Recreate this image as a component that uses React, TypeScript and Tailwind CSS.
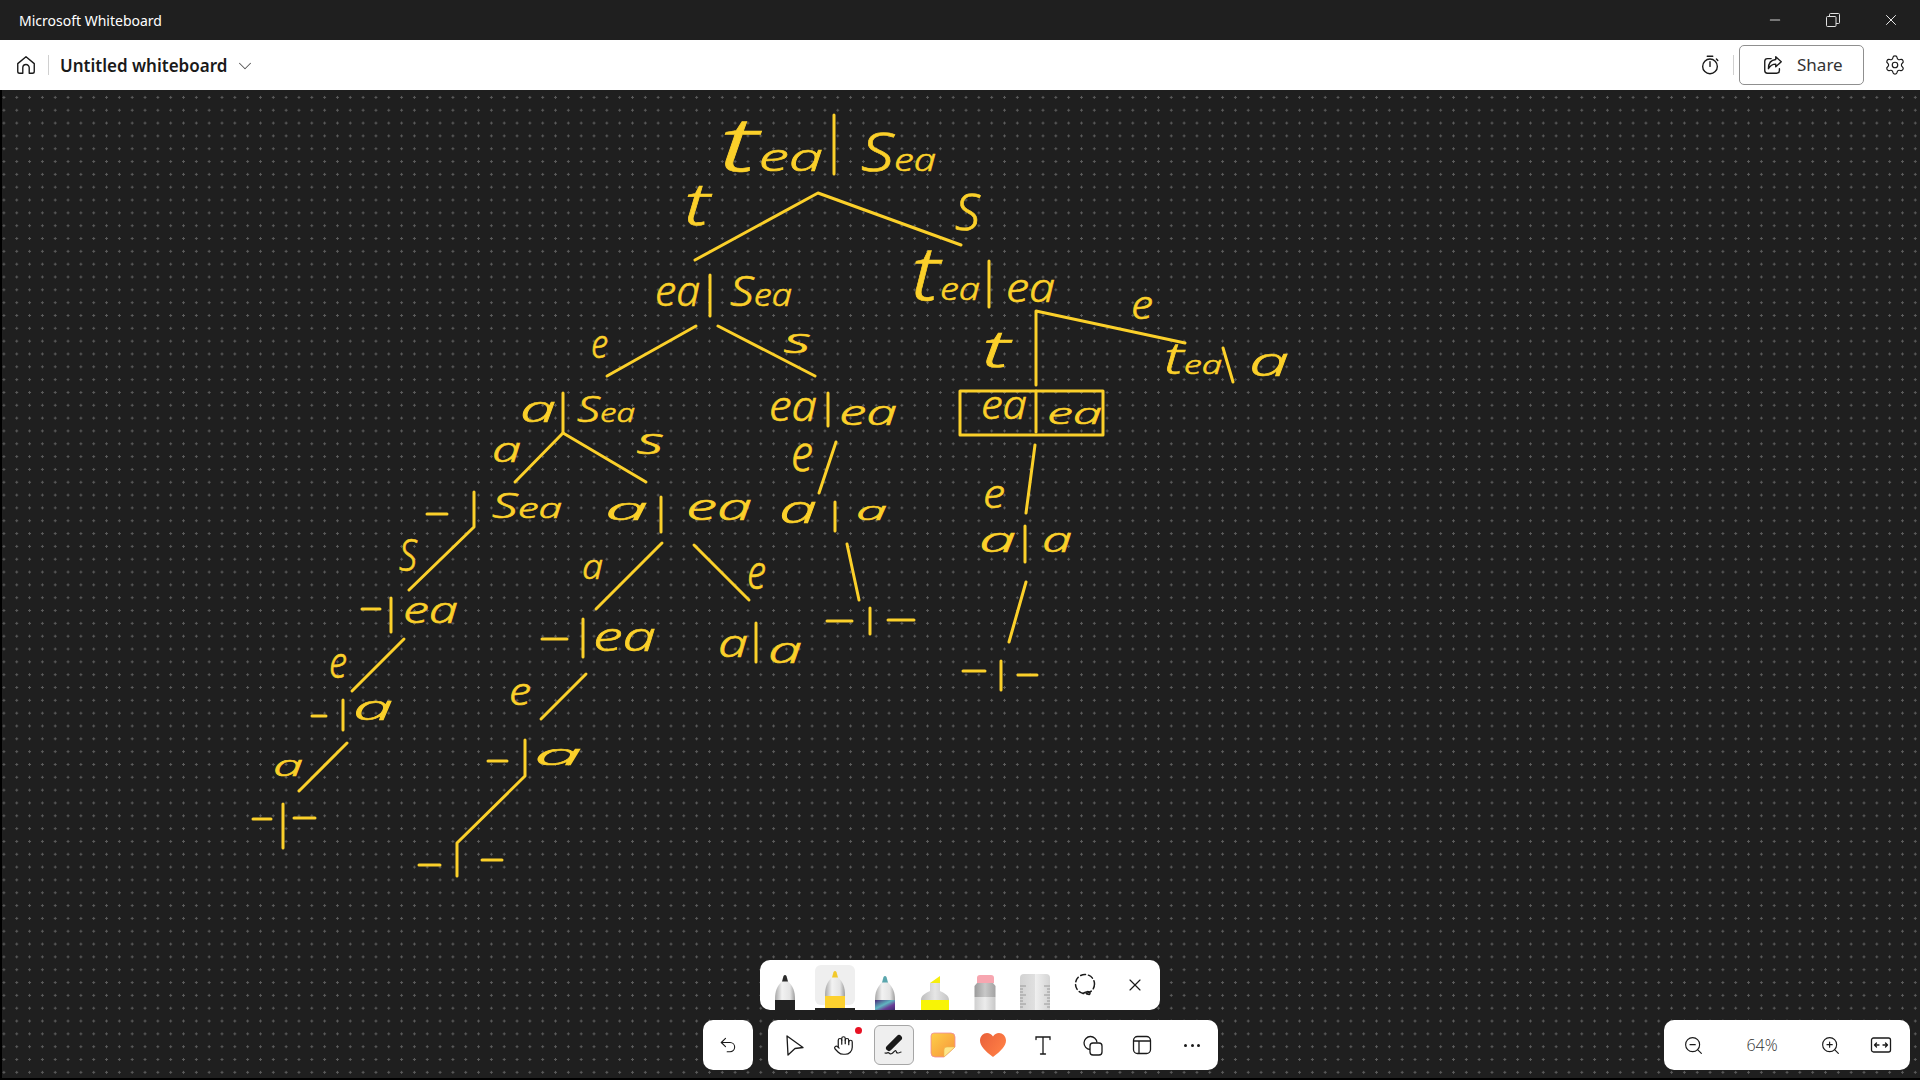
import type { ReactNode } from 'react';
import { ChevronDown, Hand, Minus, Settings, X, ZoomIn, ZoomOut, Undo2 } from 'lucide-react';

const INK = '#fbd02a';

// ink strokes of the tree, in page coordinates
const strokes = [
  'M834 115V174',
  'M695 260L818 193L961 245',
  'M989 261V307',
  'M1036 385V311L1185 343',
  'M1223 348L1233 382',
  'M710 275V316',
  'M696 326L607 376',
  'M718 326L815 376',
  'M960 391H1103V435H960Z',
  'M1036 391V432',
  'M828 393V426',
  'M563 393V433',
  'M515 482L563 433L646 482',
  'M661 497V532',
  'M836 442L819 493',
  'M835 502V531',
  'M662 543L596 609',
  'M694 545L749 600',
  'M847 544L859 600',
  'M827 621H852',
  'M870 608V634',
  'M888 620H914',
  'M542 639H567',
  'M583 619V657',
  'M756 623V662',
  'M427 514H447',
  'M474 492V527L409 590',
  'M362 609H380',
  'M391 598V632',
  'M404 639L352 691',
  'M312 716H326',
  'M343 700V730',
  'M347 743L299 791',
  'M253 819H271',
  'M283 804V848',
  'M294 818H315',
  'M586 674L541 719',
  'M488 761H507',
  'M525 740V776L457 843V876',
  'M419 865H440',
  'M482 860H502',
  'M1035 445L1026 513',
  'M1025 526V562',
  'M1026 582L1009 642',
  'M963 671H985',
  'M1001 661V690',
  'M1018 675H1037',
];

type Word = { t: string; x: number; y: number; w: number; s: number; big?: number };

// handwritten labels: left edge, baseline, width, size, optional larger first letter
const words: Word[] = [
  { t: 'tea', x: 719, y: 171, w: 104, s: 38, big: 76 },
  { t: 'Sea', x: 861, y: 171, w: 75, s: 32, big: 53 },
  { t: 't', x: 684, y: 225, w: 26, s: 58 },
  { t: 'S', x: 955, y: 230, w: 25, s: 50 },
  { t: 'ea', x: 655, y: 306, w: 45, s: 42 },
  { t: 'Sea', x: 730, y: 306, w: 62, s: 32, big: 42 },
  { t: 'tea', x: 911, y: 300, w: 69, s: 32, big: 76 },
  { t: 'ea', x: 1006, y: 302, w: 49, s: 40 },
  { t: 'e', x: 1131, y: 319, w: 22, s: 40 },
  { t: 't', x: 982, y: 367, w: 28, s: 52 },
  { t: 'tea', x: 1164, y: 374, w: 58, s: 26, big: 44 },
  { t: 'a', x: 1249, y: 376, w: 40, s: 40 },
  { t: 's', x: 784, y: 353, w: 27, s: 34 },
  { t: 'e', x: 591, y: 358, w: 17, s: 40 },
  { t: 'ea', x: 769, y: 421, w: 48, s: 42 },
  { t: 'ea', x: 839, y: 425, w: 58, s: 34 },
  { t: 'ea', x: 981, y: 419, w: 46, s: 40 },
  { t: 'ea', x: 1047, y: 424, w: 55, s: 30 },
  { t: 'a', x: 520, y: 422, w: 36, s: 36 },
  { t: 'Sea', x: 577, y: 422, w: 58, s: 26, big: 36 },
  { t: 'a', x: 492, y: 462, w: 29, s: 34 },
  { t: 's', x: 637, y: 454, w: 27, s: 36 },
  { t: 'Sea', x: 492, y: 518, w: 70, s: 28, big: 34 },
  { t: 'a', x: 605, y: 520, w: 43, s: 32 },
  { t: 'ea', x: 686, y: 520, w: 66, s: 36 },
  { t: 'e', x: 791, y: 471, w: 22, s: 50 },
  { t: 'a', x: 779, y: 523, w: 38, s: 38 },
  { t: 'a', x: 856, y: 520, w: 31, s: 26 },
  { t: 'a', x: 582, y: 579, w: 21, s: 34 },
  { t: 'e', x: 747, y: 589, w: 19, s: 48 },
  { t: 'ea', x: 593, y: 651, w: 63, s: 40 },
  { t: 'a', x: 718, y: 657, w: 30, s: 38 },
  { t: 'a', x: 768, y: 663, w: 34, s: 36 },
  { t: 'S', x: 399, y: 571, w: 18, s: 44 },
  { t: 'ea', x: 403, y: 623, w: 55, s: 36 },
  { t: 'e', x: 329, y: 678, w: 18, s: 44 },
  { t: 'a', x: 353, y: 720, w: 40, s: 34 },
  { t: 'a', x: 273, y: 776, w: 30, s: 30 },
  { t: 'e', x: 509, y: 705, w: 22, s: 38 },
  { t: 'a', x: 534, y: 765, w: 48, s: 30 },
  { t: 'e', x: 983, y: 508, w: 22, s: 40 },
  { t: 'a', x: 979, y: 552, w: 37, s: 34 },
  { t: 'a', x: 1042, y: 552, w: 30, s: 34 },
];

const Ink = () => (
  <svg viewBox="0 90 1920 990" className="absolute inset-0 w-full h-full">
    <g fill="none" stroke={INK} strokeWidth="3" strokeLinecap="round" strokeLinejoin="round">
      {strokes.map((d) => (
        <path key={d} d={d} />
      ))}
    </g>
    <g fill={INK} stroke={INK} strokeWidth="0.6" fontFamily="'Noto Sans', sans-serif" fontStyle="italic" fontWeight="300">
      {words.map((w) => (
        <text key={`${w.t}-${w.x}-${w.y}`} x={w.x} y={w.y} fontSize={w.s} textLength={w.w} lengthAdjust="spacingAndGlyphs">
          {w.big ? (
            <>
              <tspan fontSize={w.big}>{w.t[0]}</tspan>
              {w.t.slice(1)}
            </>
          ) : (
            w.t
          )}
        </text>
      ))}
    </g>
  </svg>
);

const Icon = ({ size = 24, children, className }: { size?: number; children: ReactNode; className?: string }) => (
  <svg
    width={size}
    height={size}
    viewBox="0 0 24 24"
    fill="none"
    stroke="currentColor"
    strokeWidth="1.5"
    strokeLinecap="round"
    strokeLinejoin="round"
    className={className}
  >
    {children}
  </svg>
);

const HomeIcon = () => (
  <Icon size={22}>
    <path d="M3 10.5L12 3l9 7.5V19a2 2 0 0 1-2 2h-3.500V15a3.500 3.500 0 0 0-7 0v6H5a2 2 0 0 1-2-2Z" />
  </Icon>
);

const TimerIcon = () => (
  <Icon size={22}>
    <circle cx="12" cy="13.500" r="8" />
    <path d="M9 2.500h6M12 8.500v5M19 5.500l1.500 1.500" />
  </Icon>
);

const ShareIcon = () => (
  <Icon size={22}>
    <path d="M10 5H6a3 3 0 0 0-3 3v10a3 3 0 0 0 3 3h10a3 3 0 0 0 3-3v-2" />
    <path d="M15 3l6 5.500-6 5.500v-3c-4 0-6 1.500-8 5 0-6 3-9.500 8-10Z" />
  </Icon>
);

const RestoreIcon = () => (
  <svg width="14" height="14" viewBox="0 0 14 14" fill="none" stroke="currentColor" strokeWidth="1">
    <rect x="0.500" y="3.500" width="9.500" height="10" rx="1" />
    <path d="M3.500 3.500V1.500a1 1 0 0 1 1-1h8a1 1 0 0 1 1 1v8a1 1 0 0 1-1 1H10" />
  </svg>
);

const PenBody = ({ tip, band, tipTop, bandTop, spread = 10 }: { tip: string; band: string; tipTop: number; bandTop: number; spread?: number }) => (
  <svg viewBox="0 0 40 50" className="relative w-10 h-[50px]">
    <defs>
      <linearGradient id={`cone-${tip.slice(1)}`} x1="0" x2="1">
        <stop offset="0" stopColor="#a8a8a8" />
        <stop offset="0.35" stopColor="#f2f2f2" />
        <stop offset="0.75" stopColor="#e4e4e4" />
        <stop offset="1" stopColor="#9c9c9c" />
      </linearGradient>
    </defs>
    <path
      d={`M${20 - 3} ${tipTop + 6}C${20 - spread + 2} ${tipTop + 12} ${20 - spread} ${bandTop - 10} ${20 - spread} ${bandTop}H${20 + spread}C${20 + spread} ${bandTop - 10} ${20 + spread - 2} ${tipTop + 12} ${20 + 3} ${tipTop + 6}Z`}
      fill={`url(#cone-${tip.slice(1)})`}
    />
    <path d={`M17 ${tipTop + 6.500}L18.500 ${tipTop + 1}Q20 ${tipTop - 1} 21.500 ${tipTop + 1}L23 ${tipTop + 6.500}Z`} fill={tip} />
    <rect x={20 - spread} y={bandTop} width={spread * 2} height={50 - bandTop} fill={band} />
  </svg>
);

const PenTray = () => (
  <div className="absolute left-[760px] top-[870px] w-[400px] h-[50px] bg-white rounded-[10px] overflow-hidden flex items-center gap-[10px] pl-[5px]">
    <div className="w-10 h-full">
      <PenBody tip="#2b2b2b" band="#222222" tipTop={15} bandTop={40} />
    </div>
    <div className="relative w-10 h-full">
      <div className="absolute left-0 top-[5px] w-10 h-10 bg-[#efefef] rounded-md" />
      <PenBody tip="#f2c92c" band="#fdd12f" tipTop={11} bandTop={36} />
      <div className="absolute left-0 bottom-0 w-10 h-[2px] bg-[#222222]" />
    </div>
    <div className="w-10 h-full">
      <svg viewBox="0 0 40 50" className="w-10 h-[50px]">
        <defs>
          <linearGradient id="rainbow" x1="0" x2="1" y1="0" y2="1">
            <stop offset="0" stopColor="#4a2a78" />
            <stop offset="0.45" stopColor="#5fb6c0" />
            <stop offset="0.7" stopColor="#6a3d96" />
            <stop offset="1" stopColor="#3c2a70" />
          </linearGradient>
          <linearGradient id="cone3" x1="0" x2="1">
            <stop offset="0" stopColor="#a8a8a8" />
            <stop offset="0.35" stopColor="#f2f2f2" />
            <stop offset="0.75" stopColor="#e4e4e4" />
            <stop offset="1" stopColor="#9c9c9c" />
          </linearGradient>
        </defs>
        <path d="M17 22C12 28 10 32 10 40H30C30 32 28 28 23 22Z" fill="url(#cone3)" />
        <path d="M17 22.500L18.500 17Q20 15 21.500 17L23 22.500Z" fill="#5aa6ad" />
        <rect x="10" y="40" width="20" height="10" fill="url(#rainbow)" />
      </svg>
    </div>
    <div className="w-10 h-full">
      <svg viewBox="0 0 40 50" className="w-10 h-[50px]">
        <defs>
          <linearGradient id="marker" x1="0" x2="1">
            <stop offset="0" stopColor="#bdbdbd" />
            <stop offset="0.5" stopColor="#e6e6e6" />
            <stop offset="1" stopColor="#c4c4c4" />
          </linearGradient>
        </defs>
        <path d="M15 23L25 16V23Z" fill="#f6ee10" />
        <path d="M15 23H25V31C29 33 34 35 34 40H6C6 35 11 33 15 31Z" fill="url(#marker)" />
        <rect x="6" y="40" width="28" height="10" fill="#f8f405" />
      </svg>
    </div>
    <div className="w-10 h-full">
      <svg viewBox="0 0 40 50" className="w-10 h-[50px]">
        <defs>
          <linearGradient id="eraser" x1="0" x2="1">
            <stop offset="0" stopColor="#9a9a9a" />
            <stop offset="0.5" stopColor="#c8c8c8" />
            <stop offset="1" stopColor="#a2a2a2" />
          </linearGradient>
          <linearGradient id="eraserLow" x1="0" x2="1">
            <stop offset="0" stopColor="#cfcfcf" />
            <stop offset="0.5" stopColor="#ececec" />
            <stop offset="1" stopColor="#c8c8c8" />
          </linearGradient>
        </defs>
        <path d="M12 23V18a3 3 0 0 1 3-3h11a3 3 0 0 1 3 3v5Z" fill="#f7a6b0" />
        <path d="M12 23H28L30.500 26V37H9.500V26Z" fill="url(#eraser)" />
        <rect x="9.500" y="37" width="21" height="13" fill="url(#eraserLow)" />
      </svg>
    </div>
    <div className="w-10 h-full">
      <svg viewBox="0 0 40 50" className="w-10 h-[50px]">
        <defs>
          <linearGradient id="ruler" x1="0" x2="1">
            <stop offset="0" stopColor="#d2d2d2" />
            <stop offset="0.5" stopColor="#e0e0e0" />
            <stop offset="0.5" stopColor="#f0f0f0" />
            <stop offset="1" stopColor="#d4d4d4" />
          </linearGradient>
        </defs>
        <path d="M5 50V18a4 4 0 0 1 4-4h22a4 4 0 0 1 4 4v32Z" fill="url(#ruler)" />
        <path
          d="M5 26h6M5 29h3M5 32h3M5 35h6M5 38h3M5 41h3M5 44h6M5 47h3M35 26h-6M35 29h-3M35 32h-3M35 35h-6M35 38h-3M35 41h-3M35 44h-6M35 47h-3"
          stroke="#8a8a8a"
          strokeWidth="0.8"
        />
      </svg>
    </div>
    <div className="w-10 h-full flex items-center justify-center">
      <svg width="24" height="24" viewBox="0 0 24 24" fill="none" stroke="#1a1a1a" strokeWidth="1.500" strokeLinecap="round">
        <circle cx="12" cy="11" r="9.500" strokeDasharray="5 3" />
        <path d="M10 20.500c2-2 7-3 7 0 0 1.500-3 1-4-.5" />
      </svg>
    </div>
    <div className="w-10 h-full flex items-center justify-center">
      <X size={20} strokeWidth={1.4} className="text-[#1a1a1a]" />
    </div>
  </div>
);

const ToolButton = ({ children, className = '' }: { children: ReactNode; className?: string }) => (
  <div className={`relative w-10 h-10 flex items-center justify-center text-[#1a1a1a] ${className}`}>{children}</div>
);

const ToolBar = () => (
  <div className="absolute left-[703px] top-[930px] flex gap-[15px]">
    <div className="w-[50px] h-[50px] bg-white rounded-[10px] flex items-center justify-center text-[#1a1a1a]">
      <Undo2 size={20} strokeWidth={1.3} />
    </div>
    <div className="w-[450px] h-[50px] bg-white rounded-[10px] flex items-center gap-[9.75px] pl-[6px]">
      <ToolButton>
        <svg width="24" height="24" viewBox="0 0 24 24" fill="none" stroke="currentColor" strokeWidth="1.300" strokeLinejoin="round">
          <path d="M5 3L21 14.500L13 15.500L6 22Z" />
        </svg>
      </ToolButton>
      <ToolButton>
        <Hand size={21} strokeWidth={1.4} />
        <div className="absolute right-[2px] top-[2px] w-[7px] h-[7px] rounded-full bg-[#e81123]" />
      </ToolButton>
      <ToolButton className="bg-[#efefef] border border-[#a6a6a6] rounded-md">
        <svg width="24" height="24" viewBox="0 0 24 24" fill="none" stroke="currentColor" strokeLinecap="round">
          <path d="M17 5L7 15" strokeWidth="6" />
          <path d="M3 20c2 .500 3-1 4 0s1 1.500 3 .500 3-4 4-2.500 0 2 2 2 2-1 3-1" strokeWidth="1.200" />
        </svg>
      </ToolButton>
      <ToolButton>
        <svg width="26" height="26" viewBox="0 0 26 26">
          <defs>
            <linearGradient id="note" x1="0" y1="0" x2="1" y2="1">
              <stop offset="0" stopColor="#fdd049" />
              <stop offset="1" stopColor="#f7923a" />
            </linearGradient>
          </defs>
          <path d="M4 1H21a4 4 0 0 1 4 4V15L14 25H5a4 4 0 0 1-4-4V4a3 3 0 0 1 3-3Z" fill="url(#note)" stroke="#f08ca0" strokeWidth="0.800" />
          <path d="M14 25V18a3 3 0 0 1 3-3H25Z" fill="#fde68a" stroke="#e9b94e" strokeWidth="0.600" />
        </svg>
      </ToolButton>
      <ToolButton>
        <svg width="28" height="26" viewBox="0 0 28 26">
          <defs>
            <linearGradient id="heart" x1="0" y1="0" x2="1" y2="0.600">
              <stop offset="0" stopColor="#e9603a" />
              <stop offset="1" stopColor="#ff7f45" />
            </linearGradient>
          </defs>
          <path d="M14 25C6 19 1 14 1 8.500 1 4 4.500 1 8 1c2.500 0 4.700 1.300 6 3.500C15.300 2.300 17.500 1 20 1c3.500 0 7 3 7 7.500C27 14 22 19 14 25Z" fill="url(#heart)" />
        </svg>
      </ToolButton>
      <ToolButton>
        <svg width="24" height="24" viewBox="0 0 24 24" fill="none" stroke="currentColor" strokeWidth="1.300" strokeLinecap="round">
          <path d="M5 6.500V4H19V6.500M12 4V21M9.500 21H14.500" />
        </svg>
      </ToolButton>
      <ToolButton>
        <svg width="24" height="24" viewBox="0 0 24 24" fill="none" stroke="currentColor" strokeWidth="1.300">
          <path d="M9 16.500a6.500 6.500 0 1 1 7-7" />
          <rect x="9" y="10" width="12" height="12" rx="3" />
        </svg>
      </ToolButton>
      <ToolButton>
        <svg width="24" height="24" viewBox="0 0 24 24" fill="none" stroke="currentColor" strokeWidth="1.300">
          <rect x="3.500" y="3.500" width="17" height="17" rx="4" />
          <path d="M3.500 8H20.500M9 8V20.500" />
        </svg>
      </ToolButton>
      <ToolButton>
        <div className="flex gap-[3.500px]">
          <div className="w-[3px] h-[3px] rounded-full bg-[#1a1a1a]" />
          <div className="w-[3px] h-[3px] rounded-full bg-[#1a1a1a]" />
          <div className="w-[3px] h-[3px] rounded-full bg-[#1a1a1a]" />
        </div>
      </ToolButton>
    </div>
  </div>
);

const ZoomBar = () => (
  <div className="absolute left-[1664px] top-[930px] w-[246px] h-[50px] bg-white rounded-[10px] flex items-center text-[#1a1a1a]">
    <div className="w-[58px] flex justify-center">
      <ZoomOut size={21} strokeWidth={1.3} />
    </div>
    <div className="w-[80px] text-center text-[16px] font-light text-[#333333] font-['Open_Sans',sans-serif]">64%</div>
    <div className="w-[56px] flex justify-center">
      <ZoomIn size={21} strokeWidth={1.3} />
    </div>
    <div className="w-[45px] flex justify-center">
      <svg width="22" height="18" viewBox="0 0 22 18" fill="none" stroke="currentColor" strokeWidth="1.300" strokeLinecap="round" strokeLinejoin="round">
        <rect x="1.500" y="2" width="19" height="14" rx="2" />
        <path d="M4.500 9H9M6.500 7L4.500 9L6.500 11M13 9H17.500M15.500 7L17.500 9L15.500 11" />
      </svg>
    </div>
  </div>
);

export default function App() {
  return (
    <div className="w-screen h-screen flex flex-col overflow-hidden font-['Open_Sans',sans-serif]">
      {/* Title bar */}
      <div className="h-10 bg-[#1f1f1f] text-white flex items-center justify-between pl-[19px]">
        <span className="text-[14px] font-['Noto_Sans',sans-serif]">Microsoft Whiteboard</span>
        <div className="flex items-center">
          <div className="w-[58px] flex justify-center text-[#d0d0d0]">
            <Minus size={16} strokeWidth={1.6} />
          </div>
          <div className="w-[58px] flex justify-center text-[#e0e0e0]">
            <RestoreIcon />
          </div>
          <div className="w-[58px] flex justify-center">
            <X size={18} strokeWidth={1.2} />
          </div>
        </div>
      </div>

      {/* Header */}
      <div className="h-[50px] bg-white flex items-center text-[#1a1a1a] pr-[14px]">
        <div className="w-[49px] h-5 flex items-center justify-center border-r border-[#d0d0d0] pl-[4px]">
          <HomeIcon />
        </div>
        <span className="ml-[11px] mt-[2px] text-[17px] font-semibold font-['Noto_Sans',sans-serif]">Untitled whiteboard</span>
        <ChevronDown size={22} strokeWidth={1.1} className="ml-[7px] mt-[1px] text-[#555555]" />
        <div className="ml-auto flex items-center">
          <TimerIcon />
          <div className="w-px h-5 bg-[#d0d0d0] ml-[12px] mr-[5px]" />
          <div className="w-[125px] h-10 border border-[#8f8f8f] rounded-[5px] flex items-center pl-[22px] gap-[13px]">
            <ShareIcon />
            <span className="text-[17px] text-[#333333] font-['Noto_Sans',sans-serif]">Share</span>
          </div>
          <Settings size={22} strokeWidth={1.3} className="ml-[20px]" />
        </div>
      </div>

      {/* Canvas */}
      <div className="relative flex-1 bg-[#1f1f1f] shadow-[inset_2px_0_0_#000,inset_0_-2px_0_#000] bg-[radial-gradient(circle,#5c5c5c_1px,transparent_1.2px)] bg-[size:12.83px_12.83px] bg-[position:-2.5px_1px]">
        <Ink />
        <PenTray />
        <ToolBar />
        <ZoomBar />
      </div>
    </div>
  );
}
